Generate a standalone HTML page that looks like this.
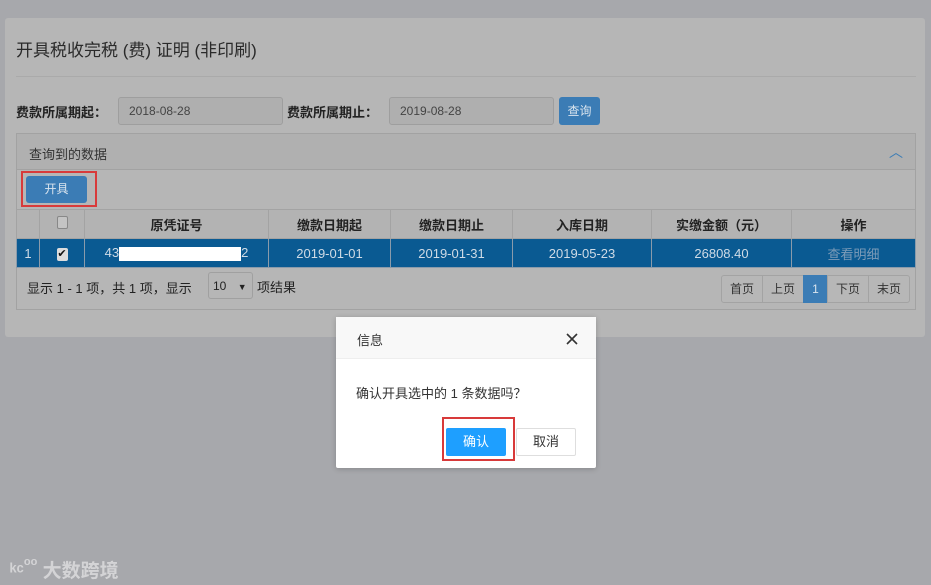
<!DOCTYPE html>
<html><head><meta charset="utf-8"><style>
*{box-sizing:border-box;margin:0;padding:0}
body{width:931px;height:585px;background:#a7a8ac;font-family:"Liberation Sans","Noto Sans CJK SC",sans-serif;font-size:13px;color:#222;position:relative;overflow:hidden}
.abs{position:absolute}
.panel{left:5px;top:18px;width:920px;height:319px;background:#b6b6b6;border-radius:3px}
.title{left:16px;top:36px;font-size:17px;color:#2a2a2a}
.hr{left:16px;top:76px;width:900px;height:1px;background:#aaaaaa}
.lbl{font-weight:bold;font-size:13px;color:#222;top:102px}
.inp{top:97px;height:28px;border:1px solid #9e9e9e;border-radius:3px;background:#afafaf;color:#444;font-size:12px;padding:6px 10px}
.btn{background:#3b7cb5;color:#d9e4ee;border-radius:3px;font-size:12px;text-align:center}
.box{left:16px;top:133px;width:900px;height:177px;border:1px solid #a2a2a2;background:#b6b6b6}
table{border-collapse:collapse;position:absolute;left:16px;top:209px;width:900px;font-size:13px}
td{border:1px solid #a3a3a3;text-align:center;height:29px}
thead td{font-weight:bold;background:#b3b3b3;color:#222}
tr.sel td{background:#0a5a92;color:#cfdbe6;border-color:#8a9bab}
.pg{top:275px;height:28px;border:1px solid #a3a3a3;font-size:12px;color:#333;text-align:center;line-height:26px;background:#b7b7b7}
</style></head><body>
<div class="abs panel"></div>
<div class="abs title">开具税收完税 (费) 证明 (非印刷)</div>
<div class="abs hr"></div>
<div class="abs lbl" style="left:16px">费款所属期起：</div>
<div class="abs inp" style="left:118px;width:165px">2018-08-28</div>
<div class="abs lbl" style="left:287px">费款所属期止：</div>
<div class="abs inp" style="left:389px;width:165px">2019-08-28</div>
<div class="abs btn" style="left:559px;top:97px;width:41px;height:28px;line-height:28px">查询</div>
<div class="abs box"></div>
<div class="abs" style="left:17px;top:134px;width:898px;height:36px;background:#b0b0b0;border-bottom:1px solid #a2a2a2"></div>
<div class="abs" style="left:29px;top:144px;font-size:13px;color:#333">查询到的数据</div>
<div class="abs" style="left:889px;top:142px;color:#3b7cb5;font-size:14px">︿</div>
<div class="abs" style="left:21px;top:171px;width:76px;height:36px;border:2px solid #d83a3a"></div>
<div class="abs btn" style="left:26px;top:176px;width:61px;height:27px;line-height:27px">开具</div>
<table>
<thead><tr><td style="width:23px"></td><td style="width:45px"><span style="display:inline-block;width:11px;height:13px;border:1px solid #888;border-radius:2px;background:#c4c4c4"></span></td><td style="width:184px">原凭证号</td><td style="width:122px">缴款日期起</td><td style="width:122px">缴款日期止</td><td style="width:139px">入库日期</td><td style="width:140px">实缴金额（元）</td><td>操作</td></tr></thead>
<tr class="sel"><td>1</td><td><span style="display:inline-block;width:11px;height:13px;background:#ddd;color:#111;font-size:11px;line-height:13px;border-radius:2px">✔</span></td><td style="position:relative">43<span style="display:inline-block;width:122px;height:14px;background:#fff;vertical-align:middle"></span>2</td><td>2019-01-01</td><td>2019-01-31</td><td>2019-05-23</td><td>26808.40</td><td style="color:#7d9cb8">查看明细</td></tr>
</table>
<div class="abs" style="left:27px;top:278px;color:#222">显示 1 - 1 项，共 1 项，显示</div>
<div class="abs" style="left:208px;top:272px;width:45px;height:27px;border:1px solid #a0a0a0;border-radius:3px;font-size:12px;padding:6px 4px">10 <span style="font-size:9px;margin-left:8px">▼</span></div>
<div class="abs" style="left:257px;top:277px">项结果</div>
<div class="abs pg" style="left:721px;width:42px;border-radius:3px 0 0 3px">首页</div>
<div class="abs pg" style="left:762px;width:42px">上页</div>
<div class="abs pg" style="left:803px;width:25px;background:#3b7cb5;color:#d9e4ee;border-color:#3b7cb5">1</div>
<div class="abs pg" style="left:827px;width:42px">下页</div>
<div class="abs pg" style="left:868px;width:42px;border-radius:0 3px 3px 0">末页</div>
<div class="abs" style="left:336px;top:317px;width:260px;height:151px;background:#fff;border-radius:2px;box-shadow:0 1px 6px rgba(0,0,0,.2)"></div>
<div class="abs" style="left:336px;top:317px;width:260px;height:42px;background:#f8f8f8;border-bottom:1px solid #eee"></div>
<div class="abs" style="left:357px;top:330px;font-size:13px;color:#333">信息</div>
<svg class="abs" style="left:566px;top:333px" width="12" height="12"><path d="M1 1L11 11M11 1L1 11" stroke="#333" stroke-width="1.6"/></svg>
<div class="abs" style="left:356px;top:383px;font-size:13px;color:#333">确认开具选中的 1 条数据吗？</div>
<div class="abs" style="left:442px;top:417px;width:73px;height:44px;border:2px solid #d83a3a"></div>
<div class="abs" style="left:446px;top:428px;width:60px;height:28px;background:#1e9fff;border-radius:2px;color:#fff;text-align:center;line-height:28px;font-size:13px">确认</div>
<div class="abs" style="left:516px;top:428px;width:60px;height:28px;border:1px solid #dedede;border-radius:2px;color:#333;text-align:center;line-height:26px;font-size:13px">取消</div>
<div class="abs" style="left:10px;top:556px;font-size:19px;color:#d4d4d6;font-weight:bold">ᵏᶜ<span style="font-size:11px;vertical-align:top">oo</span> 大数跨境</div>
</body></html>
